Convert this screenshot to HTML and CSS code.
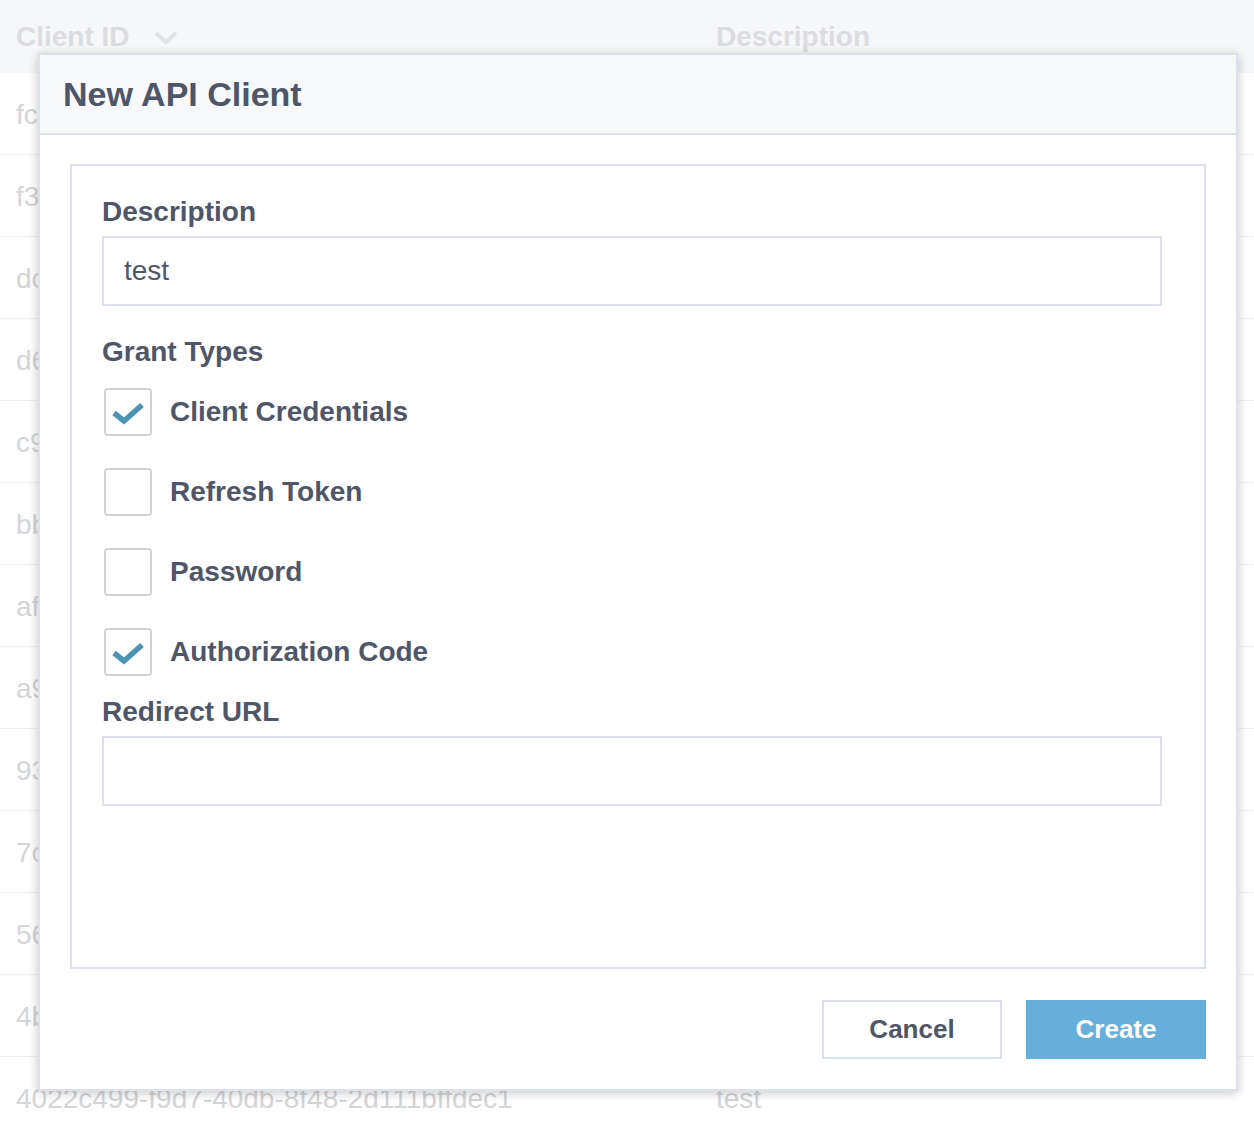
FILE: index.html
```html
<!DOCTYPE html>
<html lang="en">
<head>
  <meta charset="UTF-8" />
  <title>API Clients</title>
  <link rel="stylesheet" href="styles.css">
</head>
<body>
  <table class="clients">
    <thead>
      <tr>
        <th class="col-id">
          Client ID
          <svg class="sort" width="26" height="16" viewBox="0 0 26 16"><path d="M3 3 L13 12 L23 3" fill="none" stroke="#e2e3e6" stroke-width="4"/></svg>
        </th>
        <th>Description</th>
      </tr>
    </thead>
    <tbody>
      <tr><td>fc81a0d2-3b1e-4c77-9f0a-6d2e5b1c8a34</td><td>test</td></tr>
      <tr><td>f3d92e10-7a4c-4b2f-8e61-0c5a9d3f2b71</td><td>test</td></tr>
      <tr><td>dc47b6e8-1f3a-4d90-a2c5-8e7f6b0d4c12</td><td>test</td></tr>
      <tr><td>d6a1e3f7-9c2b-4e58-b0d4-3f1a7c9e5b26</td><td>test</td></tr>
      <tr><td>c9e05b3d-4a7f-41c6-9d28-5b3e0f7a1c89</td><td>test</td></tr>
      <tr><td>bb72f4c1-6e0d-4a93-8c5f-2d9b1e4a7f30</td><td>test</td></tr>
      <tr><td>af3c8d16-2b5e-4f07-a9e1-7c4d0b6e3a58</td><td>test</td></tr>
      <tr><td>a9d4e2b7-8f1c-4a36-b5e0-9c2f7d3a1e64</td><td>test</td></tr>
      <tr><td>93b1f7a0-5d2e-4c84-9a6b-1e8f3c5d7b02</td><td>test</td></tr>
      <tr><td>7c6e2a94-3f8b-4d15-a7c0-4b9e1d6f2a83</td><td>test</td></tr>
      <tr><td>56f0d3b8-9a4c-4e27-b1d6-8c3a5e0f7b49</td><td>test</td></tr>
      <tr><td>4b8a1c5e-7d2f-4093-8e4b-6a1c9f3d5e70</td><td>test</td></tr>
      <tr><td>4022c499-f9d7-40db-8f48-2d111bffdec1</td><td>test</td></tr>
    </tbody>
  </table>

  <div class="modal">
    <div class="modal-header">
      <h2>New API Client</h2>
    </div>
    <div class="modal-body">
      <form class="panel">
        <label class="field-label" for="description">Description</label>
        <input class="text-input" type="text" id="description" value="test">

        <div class="field-label grant-title">Grant Types</div>
        <div class="grants">
          <label class="grant">
            <span class="box checked">
              <svg width="48" height="48" viewBox="0 0 48 48"><path d="M10 25 L20 33 L38 17" fill="none" stroke="#4a93b3" stroke-width="5.5"/></svg>
            </span>
            Client Credentials
          </label>
          <label class="grant">
            <span class="box"></span>
            Refresh Token
          </label>
          <label class="grant">
            <span class="box"></span>
            Password
          </label>
          <label class="grant">
            <span class="box checked">
              <svg width="48" height="48" viewBox="0 0 48 48"><path d="M10 25 L20 33 L38 17" fill="none" stroke="#4a93b3" stroke-width="5.5"/></svg>
            </span>
            Authorization Code
          </label>
        </div>

        <label class="field-label redirect-title" for="redirect">Redirect URL</label>
        <input class="text-input" type="text" id="redirect">
      </form>

      <div class="actions">
        <button type="button" class="btn cancel">Cancel</button>
        <button type="button" class="btn create">Create</button>
      </div>
    </div>
  </div>
</body>
</html>
```

FILE: styles.css
```css
body {
  margin: 0;
  font-family: "Liberation Sans", Arial, sans-serif;
  background: #fff;
  color: #4f5668;
  overflow: hidden;
}

/* background table, dimmed behind the dialog */
.clients {
  width: 100%;
  border-collapse: collapse;
}
.clients th {
  height: 73px;
  background: #f6f7f9;
  color: #dcdde0;
  font-size: 28px;
  font-weight: bold;
  text-align: left;
  padding: 0 16px;
  vertical-align: middle;
}
.clients td {
  height: 79px;
  border-bottom: 1px solid #f1f1f3;
  color: #d4d5d8;
  font-size: 28px;
  padding: 2px 16px 0;
  vertical-align: middle;
}
.clients tbody tr:last-child td {
  border-bottom: none;
}
.clients th.col-id,
.clients td:first-child {
  width: 668px;
}
.sort {
  vertical-align: middle;
  margin-left: 16px;
}

/* dialog */
.modal {
  position: absolute;
  left: 38px;
  top: 53px;
  width: 1200px;
  height: 1038px;
  box-sizing: border-box;
  background: #fff;
  border: 2px solid #dde1ec;
  box-shadow: 0 2px 10px rgba(0, 0, 0, 0.22);
}
.modal-header {
  height: 78px;
  background: #f7f8fa;
  border-bottom: 2px solid #dde1ec;
  display: flex;
  align-items: center;
  padding: 0 23px;
}
.modal-header h2 {
  margin: 0;
  font-size: 34px;
  color: #4f5668;
}
.modal-body {
  padding: 29px 30px 0 30px;
}

.panel {
  height: 805px;
  box-sizing: border-box;
  border: 2px solid #dde1ec;
  padding: 31px 42px 0 30px;
  display: flex;
  flex-direction: column;
}
.field-label {
  display: block;
  font-size: 28px;
  font-weight: bold;
  line-height: 30px;
  margin-bottom: 9px;
}
.text-input {
  height: 70px;
  box-sizing: border-box;
  border: 2px solid #dde1ec;
  padding: 0 20px;
  font-family: inherit;
  font-size: 28px;
  color: #4f5668;
  outline: none;
}
.grant-title {
  margin-top: 31px;
  margin-bottom: 21px;
}
.grants {
  display: flex;
  flex-direction: column;
  gap: 32px;
}
.grant {
  display: flex;
  align-items: center;
  gap: 18px;
  font-size: 28px;
  font-weight: bold;
  height: 48px;
  padding-left: 2px;
}
.box {
  width: 48px;
  height: 48px;
  box-sizing: border-box;
  border: 2px solid #d2d2d4;
  border-radius: 4px;
  background: #fff;
  position: relative;
}
.box svg {
  position: absolute;
  left: -2px;
  top: -2px;
}
.redirect-title {
  margin-top: 21px;
}

.actions {
  display: flex;
  justify-content: flex-end;
  gap: 24px;
  margin-top: 31px;
}
.btn {
  width: 180px;
  height: 59px;
  font-family: inherit;
  font-size: 26px;
  font-weight: bold;
  cursor: pointer;
}
.btn.cancel {
  background: #fff;
  border: 2px solid #dde1ec;
  color: #4f5668;
}
.btn.create {
  background: #66afdb;
  border: none;
  color: #fff;
}
```
